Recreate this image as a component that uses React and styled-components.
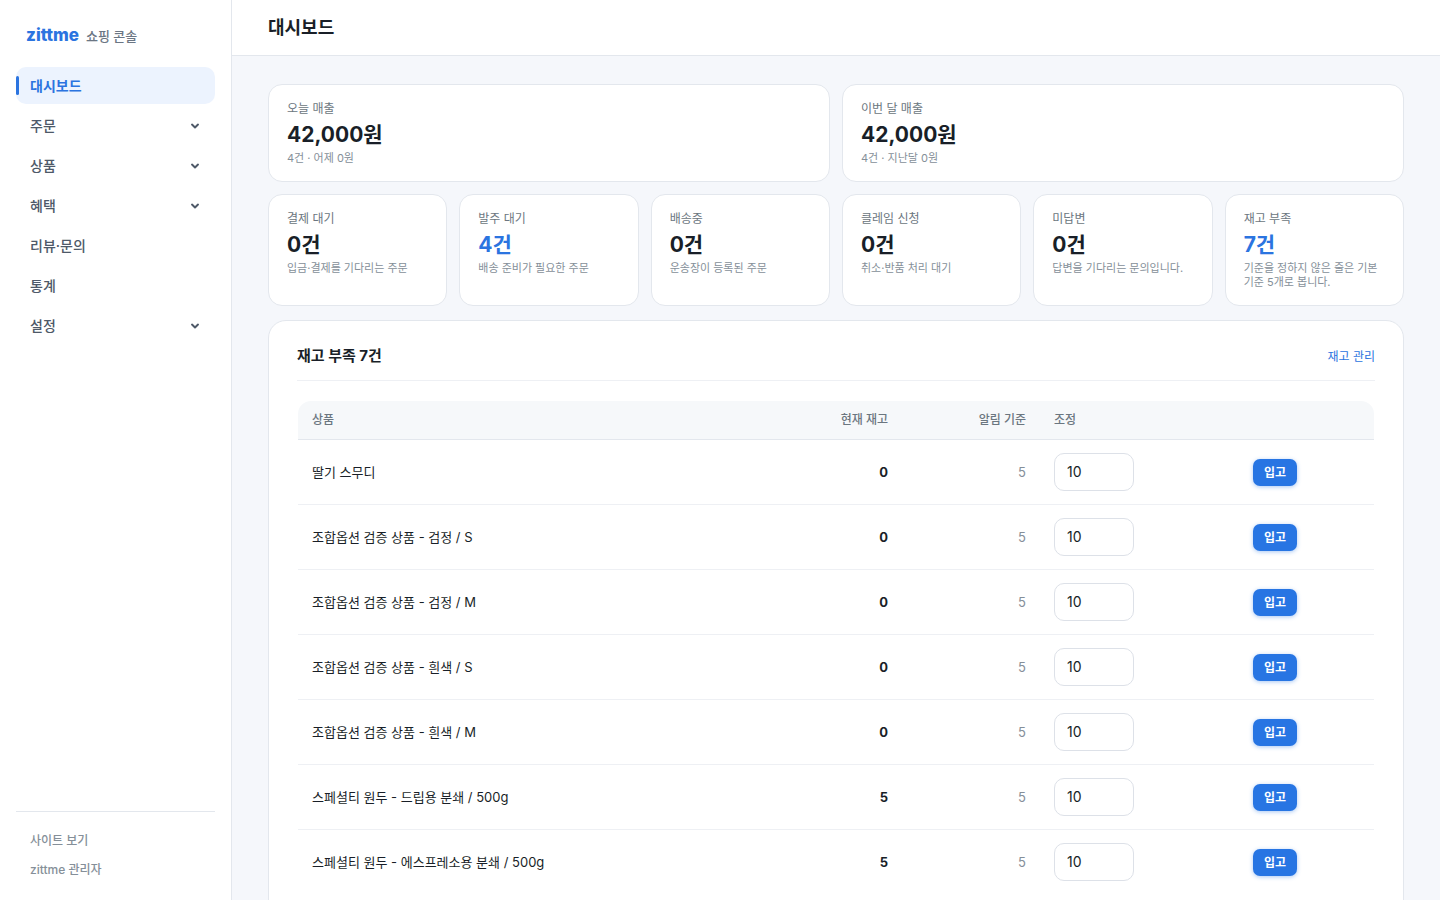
import React, { useState } from "react";
import styled, { createGlobalStyle } from "styled-components";

const navItems = [
  { label: "대시보드", active: true },
  { label: "주문", expandable: true },
  { label: "상품", expandable: true },
  { label: "혜택", expandable: true },
  { label: "리뷰·문의" },
  { label: "통계" },
  { label: "설정", expandable: true },
];

const salesStats = [
  { label: "오늘 매출", value: "42,000원", note: "4건 · 어제 0원" },
  { label: "이번 달 매출", value: "42,000원", note: "4건 · 지난달 0원" },
];

const todoStats = [
  { label: "결제 대기", value: "0건", note: "입금·결제를 기다리는 주문" },
  { label: "발주 대기", value: "4건", note: "배송 준비가 필요한 주문", accent: true },
  { label: "배송중", value: "0건", note: "운송장이 등록된 주문" },
  { label: "클레임 신청", value: "0건", note: "취소·반품 처리 대기" },
  { label: "미답변", value: "0건", note: "답변을 기다리는 문의입니다." },
  {
    label: "재고 부족",
    value: "7건",
    note: "기준을 정하지 않은 줄은 기본 기준 5개로 봅니다.",
    accent: true,
  },
];

const stockItems = [
  { name: "딸기 스무디", stock: 0, limit: 5 },
  { name: "조합옵션 검증 상품 - 검정 / S", stock: 0, limit: 5 },
  { name: "조합옵션 검증 상품 - 검정 / M", stock: 0, limit: 5 },
  { name: "조합옵션 검증 상품 - 흰색 / S", stock: 0, limit: 5 },
  { name: "조합옵션 검증 상품 - 흰색 / M", stock: 0, limit: 5 },
  { name: "스페셜티 원두 - 드립용 분쇄 / 500g", stock: 5, limit: 5 },
  { name: "스페셜티 원두 - 에스프레소용 분쇄 / 500g", stock: 5, limit: 5 },
];

const Chevron = () => (
  <svg width="10" height="10" viewBox="0 0 10 10" fill="none" aria-hidden="true">
    <path
      d="M2 3.6 5 6.4l3-2.8"
      stroke="currentColor"
      strokeWidth="2"
      strokeLinecap="round"
      strokeLinejoin="round"
    />
  </svg>
);

const Stat = ({ label, value, note, accent }) => (
  <StatCard href="#">
    <StatLabel>{label}</StatLabel>
    <StatValue $accent={accent}>{value}</StatValue>
    <StatNote>{note}</StatNote>
  </StatCard>
);

const StockRow = ({ item }) => {
  const [amount, setAmount] = useState("10");

  return (
    <tr>
      <Cell>{item.name}</Cell>
      <Cell $align="right" $strong>
        {item.stock}
      </Cell>
      <Cell $align="right" $muted>
        {item.limit}
      </Cell>
      <Cell>
        <AmountInput
          type="text"
          inputMode="numeric"
          aria-label={`${item.name} 조정`}
          value={amount}
          onChange={(e) => setAmount(e.target.value)}
        />
      </Cell>
      <Cell>
        <StockButton type="button">입고</StockButton>
      </Cell>
    </tr>
  );
};

const App = () => {
  return (
    <>
      <GlobalStyle />
      <Layout>
        <Sidebar>
          <Brand href="#">
            <BrandName>zittme</BrandName>
            <BrandSub>쇼핑 콘솔</BrandSub>
          </Brand>
          <Nav>
            {navItems.map((item) =>
              item.expandable ? (
                <NavItem as="button" type="button" key={item.label}>
                  {item.label}
                  <Chevron />
                </NavItem>
              ) : (
                <NavItem href="#" key={item.label} $active={item.active}>
                  {item.label}
                </NavItem>
              )
            )}
          </Nav>
          <SidebarFooter>
            <FooterLink href="#">사이트 보기</FooterLink>
            <FooterLink href="#">zittme 관리자</FooterLink>
          </SidebarFooter>
        </Sidebar>

        <Main>
          <TopBar>
            <PageTitle>대시보드</PageTitle>
          </TopBar>
          <Content>
            <StatGrid $columns={2}>
              {salesStats.map((stat) => (
                <Stat key={stat.label} {...stat} />
              ))}
            </StatGrid>
            <StatGrid $columns={6}>
              {todoStats.map((stat) => (
                <Stat key={stat.label} {...stat} />
              ))}
            </StatGrid>
            <Panel>
              <PanelHead>
                <PanelTitle>재고 부족 7건</PanelTitle>
                <PanelLink href="#">재고 관리</PanelLink>
              </PanelHead>
              <TableWrap>
                <Table>
                  <colgroup>
                    <col />
                    <Col $width={132} />
                    <Col $width={138} />
                    <Col $width={199} />
                    <Col $width={135} />
                  </colgroup>
                  <thead>
                    <tr>
                      <HeadCell>상품</HeadCell>
                      <HeadCell $align="right">현재 재고</HeadCell>
                      <HeadCell $align="right">알림 기준</HeadCell>
                      <HeadCell>조정</HeadCell>
                      <HeadCell />
                    </tr>
                  </thead>
                  <tbody>
                    {stockItems.map((item) => (
                      <StockRow key={item.name} item={item} />
                    ))}
                  </tbody>
                </Table>
              </TableWrap>
            </Panel>
          </Content>
        </Main>
      </Layout>
    </>
  );
};

export default App;

const GlobalStyle = createGlobalStyle`
  *,
  *::before,
  *::after {
    box-sizing: border-box;
  }

  body {
    margin: 0;
    background: #f5f7fb;
    color: #191f28;
    font-family: Inter, "Noto Sans CJK KR", sans-serif;
    font-size: 13px;
    line-height: 20px;
    word-break: keep-all;
  }

  a {
    color: inherit;
    text-decoration: none;
  }

  button,
  input {
    font: inherit;
  }
`;

const Layout = styled.div`
  display: flex;
  align-items: flex-start;
  min-height: 100vh;
`;

const Sidebar = styled.aside`
  position: sticky;
  top: 0;
  flex: 0 0 232px;
  display: flex;
  flex-direction: column;
  height: 100vh;
  padding: 24px 16px 16px;
  background: #fff;
  border-right: 1px solid #e3e7ed;
`;

const Brand = styled.a`
  display: flex;
  align-items: baseline;
  gap: 7px;
  padding: 0 10px;
  margin-bottom: 20px;
  line-height: 22px;
`;

const BrandName = styled.span`
  color: #2b74e0;
  font-size: 17px;
  font-weight: 800;
`;

const BrandSub = styled.span`
  color: #6b7684;
  font-size: 13px;
  font-weight: 500;
`;

const Nav = styled.nav`
  flex: 1;
  display: flex;
  flex-direction: column;
  gap: 3px;
`;

const NavItem = styled.a`
  position: relative;
  display: flex;
  align-items: center;
  justify-content: space-between;
  height: 37px;
  padding: 0 15px 0 14px;
  border: 0;
  border-radius: 10px;
  background: ${(props) => (props.$active ? "#ecf3fe" : "transparent")};
  color: ${(props) => (props.$active ? "#2b74e0" : "#4e5968")};
  font-size: 14px;
  font-weight: ${(props) => (props.$active ? 700 : 500)};
  text-align: left;
  cursor: pointer;

  &::before {
    content: "";
    display: ${(props) => (props.$active ? "block" : "none")};
    position: absolute;
    top: 9px;
    bottom: 9px;
    left: 0;
    width: 3px;
    border-radius: 2px;
    background: #2b74e0;
  }
`;

const SidebarFooter = styled.div`
  display: flex;
  flex-direction: column;
  padding-top: 14px;
  border-top: 1px solid #e3e7ed;
`;

const FooterLink = styled.a`
  padding: 0 14px;
  color: #858f99;
  font-size: 12px;
  font-weight: 500;
  line-height: 29px;
`;

const Main = styled.main`
  flex: 1;
  min-width: 0;
`;

const TopBar = styled.header`
  display: flex;
  align-items: center;
  height: 56px;
  padding: 0 36px;
  background: #fff;
  border-bottom: 1px solid #e3e7ed;
`;

const PageTitle = styled.h1`
  margin: 0;
  font-size: 18px;
  font-weight: 700;
  line-height: 26px;
`;

const Content = styled.div`
  padding: 28px 36px;
`;

const StatGrid = styled.section`
  display: grid;
  grid-template-columns: repeat(${(props) => props.$columns}, minmax(0, 1fr));
  gap: 12px;
  margin-bottom: 12px;
`;

const StatCard = styled.a`
  display: flex;
  flex-direction: column;
  padding: 17px 18px 16px;
  background: #fff;
  border: 1px solid #e3e7ed;
  border-radius: 14px;
`;

const StatLabel = styled.span`
  color: #6b7680;
  font-size: 12px;
  line-height: 14px;
`;

const StatValue = styled.strong`
  margin: 4px 0 1px;
  color: ${(props) => (props.$accent ? "#2b74e0" : "#191f28")};
  font-size: 21px;
  font-weight: 700;
  line-height: 30px;
`;

const StatNote = styled.span`
  color: #858f99;
  font-size: 11px;
  line-height: 14px;
`;

const Panel = styled.section`
  margin-top: 14px;
  padding: 20px 28px 28px;
  background: #fff;
  border: 1px solid #e3e7ed;
  border-radius: 18px;
`;

const PanelHead = styled.div`
  display: flex;
  align-items: baseline;
  justify-content: space-between;
  height: 40px;
  margin-bottom: 19px;
  padding-top: 5px;
  border-bottom: 1px solid #eef0f4;
`;

const PanelTitle = styled.h2`
  margin: 0;
  font-size: 15px;
  font-weight: 700;
`;

const PanelLink = styled.a`
  color: #2b74e0;
  font-size: 12px;
`;

const TableWrap = styled.div`
  overflow: hidden;
  border: 1px solid #fff;
  border-radius: 14px;
`;

const Table = styled.table`
  width: 100%;
  table-layout: fixed;
  border-collapse: separate;
  border-spacing: 0;
`;

const Col = styled.col`
  width: ${(props) => props.$width}px;
`;

const HeadCell = styled.th`
  height: 39px;
  padding: 0 14px;
  background: #f6f8fa;
  border-bottom: 1px solid #e3e7ed;
  color: #6b7680;
  font-size: 12px;
  font-weight: 500;
  text-align: ${(props) => props.$align || "left"};
`;

const Cell = styled.td`
  height: 65px;
  padding: 0 14px;
  border-bottom: 1px solid #eef0f4;
  color: ${(props) => (props.$muted ? "#858f99" : "#191f28")};
  font-weight: ${(props) => (props.$strong ? 700 : 400)};
  text-align: ${(props) => props.$align || "left"};

  tr:last-child > & {
    border-bottom-color: transparent;
  }
`;

const AmountInput = styled.input`
  display: block;
  width: 80px;
  height: 38px;
  padding: 0 12px 2px;
  background: #fff;
  border: 1px solid #dde1e8;
  border-radius: 10px;
  color: #191f28;
  font-size: 14px;
`;

const StockButton = styled.button`
  display: block;
  width: 44px;
  height: 27px;
  padding: 2px 0 0;
  border: 0;
  border-radius: 7px;
  background: #2775e3;
  box-shadow: 0 1px 4px rgba(39, 117, 227, 0.4);
  color: #fff;
  font-size: 12px;
  font-weight: 700;
  cursor: pointer;
`;
